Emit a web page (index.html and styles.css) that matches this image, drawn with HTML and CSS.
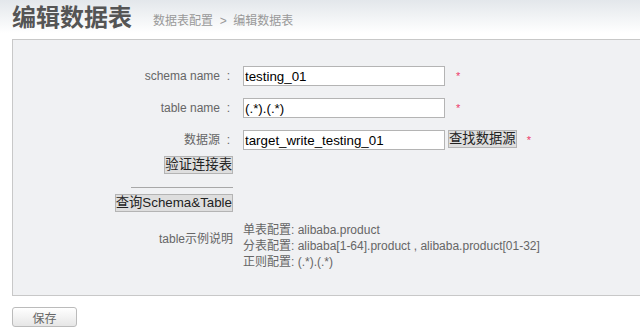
FILE: index.html
```html
<!DOCTYPE html>
<html lang="zh">
<head>
    <meta charset="UTF-8">
    <title>编辑数据表</title>
    <link rel="stylesheet" href="styles.css">
</head>
<body>
    <div class="page-head">
        <h1>编辑数据表</h1>
        <span class="crumb">数据表配置 &nbsp;&gt;&nbsp; 编辑数据表</span>
    </div>

    <div class="panel">
        <div class="row first">
            <div class="lbl">schema name&nbsp;&nbsp;:</div>
            <div class="val">
                <input type="text" class="txt" value="testing_01">
                <span class="req">*</span>
            </div>
        </div>
        <div class="row">
            <div class="lbl">table name&nbsp;&nbsp;:</div>
            <div class="val">
                <input type="text" class="txt" value="(.*).(.*)">
                <span class="req">*</span>
            </div>
        </div>
        <div class="row">
            <div class="lbl">数据源&nbsp;&nbsp;:</div>
            <div class="val">
                <input type="text" class="txt" value="target_write_testing_01"><button class="btn">查找数据源</button>
                <span class="req">*</span>
            </div>
        </div>
        <div class="row tight">
            <div class="lbl flush"><button class="btn">验证连接表</button></div>
        </div>
        <div class="row">
            <div class="lbl flush"><hr class="sep"></div>
        </div>
        <div class="row tight">
            <div class="lbl flush"><button class="btn">查询Schema&amp;Table</button></div>
        </div>
        <div class="row desc">
            <div class="lbl flush">table示例说明</div>
            <div class="val">
                单表配置: alibaba.product<br>
                分表配置: alibaba[1-64].product , alibaba.product[01-32]<br>
                正则配置: (.*).(.*)
            </div>
        </div>
    </div>

    <button class="save">保存</button>
</body>
</html>
```

FILE: styles.css
```css
body {
    margin: 0;
    font-family: "Liberation Sans", Arial, "Noto Sans CJK SC", sans-serif;
    font-size: 12px;
    color: #666;
    background: #fff;
}
.page-head {
    height: 39px;
    padding-left: 12px;
    background: linear-gradient(#e3e7eb, #ffffff 85%);
    display: flex;
    align-items: flex-end;
}
.page-head h1 {
    margin: 0 21px 6px 0;
    font-size: 24px;
    line-height: 30px;
    font-weight: bold;
    color: #555;
}
.crumb {
    margin-bottom: 11px;
    color: #999;
    font-size: 12px;
}
.panel {
    margin-left: 12px;
    height: 255px;
    background: #f0f1f3;
    border: 1px solid #c8c8c8;
    border-right: none;
}
.row {
    display: flex;
    align-items: flex-start;
    margin-top: 12px;
}
.row.first {
    margin-top: 26px;
}
.row.tight {
    margin-top: 6px;
}
.lbl {
    width: 217px;
    padding-right: 3px;
    text-align: right;
    line-height: 20px;
    display: flex;
    justify-content: flex-end;
}
.lbl.flush {
    padding-right: 0;
    width: 220px;
}
.val {
    margin-left: 10px;
    display: flex;
    align-items: flex-start;
}
.txt {
    width: 202px;
    height: 20px;
    box-sizing: border-box;
    margin: 0;
    padding: 0 1px;
    border: 1px solid #b4b4b4;
    background: #fff;
    font-family: "Liberation Sans", Arial, "Noto Sans CJK SC", sans-serif;
    font-size: 13.33px;
    color: #000;
}
.btn {
    height: 18px;
    margin: 0;
    padding: 0;
    border: 1px solid #b4b4b4;
    background: #dedede;
    font-family: "Liberation Sans", Arial, "Noto Sans CJK SC", sans-serif;
    font-size: 13.33px;
    line-height: 16px;
    color: #222;
}
.val .btn {
    margin-left: 3px;
}
.req {
    color: #ee3a6a;
    font-size: 11px;
    line-height: 20px;
    margin-left: 11px;
}
.val .btn + .req {
    margin-left: 10px;
}
.sep {
    width: 102px;
    margin: 1px 0 0 0;
    border: none;
    border-top: 1px solid #a8a8a8;
}
.desc {
    margin-top: 10px;
}
.desc .lbl {
    line-height: 16px;
    padding-top: 9px;
}
.desc .val {
    display: block;
    line-height: 16px;
}
.save {
    margin: 11px 0 0 12px;
    width: 65px;
    height: 20px;
    border: 1px solid #bbb;
    border-radius: 3px;
    background: linear-gradient(#ffffff, #e6e6e6);
    font-family: "Liberation Sans", Arial, "Noto Sans CJK SC", sans-serif;
    font-size: 12px;
    color: #666;
    padding: 0;
}
```
